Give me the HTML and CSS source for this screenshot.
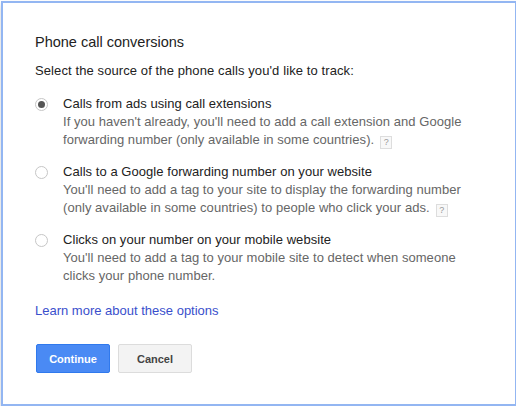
FILE: index.html
```html
<!DOCTYPE html>
<html lang="en">
<head>
  <meta charset="UTF-8">
  <title>Phone call conversions</title>
  <link rel="stylesheet" href="styles.css">
</head>
<body>
  <div class="dialog">
    <h2 class="dialog-title">Phone call conversions</h2>
    <p class="dialog-intro">Select the source of the phone calls you'd like to track:</p>

    <div class="option-list">
      <label class="option">
        <span class="radio radio-checked"></span>
        <span class="option-text">
          <span class="option-label">Calls from ads using call extensions</span>
          <span class="option-desc">If you haven't already, you'll need to add a call extension and Google forwarding number (only available in some countries).<span class="help">?</span></span>
        </span>
      </label>
      <label class="option">
        <span class="radio"></span>
        <span class="option-text">
          <span class="option-label">Calls to a Google forwarding number on your website</span>
          <span class="option-desc">You'll need to add a tag to your site to display the forwarding number (only available in some countries) to people who click your ads.<span class="help">?</span></span>
        </span>
      </label>
      <label class="option">
        <span class="radio"></span>
        <span class="option-text">
          <span class="option-label">Clicks on your number on your mobile website</span>
          <span class="option-desc">You'll need to add a tag to your mobile site to detect when someone clicks your phone number.</span>
        </span>
      </label>
    </div>

    <a href="#" class="learn-more">Learn more about these options</a>

    <div class="dialog-buttons">
      <button type="button" class="btn btn-primary">Continue</button>
      <button type="button" class="btn">Cancel</button>
    </div>
  </div>
</body>
</html>
```

FILE: styles.css
```css
body {
  margin: 0;
  background-color: #fff;
  font-family: Arial, "Liberation Sans", sans-serif;
  font-size: 13px;
  color: #222;
}

.dialog {
  width: 450px;
  margin: 1px 0 0 1px;
  padding: 29px 30px 31px 32px;
  background-color: #fff;
  border: 2px solid #93b6f2;
  box-shadow: 0 4px 6px rgba(0, 0, 0, 0.2);
}

.dialog-title {
  margin: 0 0 10px;
  font-size: 14.5px;
  font-weight: normal;
  line-height: 20px;
  color: #222;
}

.dialog-intro {
  margin: 0 0 15px;
  line-height: 18px;
  letter-spacing: 0.1px;
}

.option-list {
  display: flex;
  flex-direction: column;
  gap: 14px;
}

.option {
  display: flex;
  align-items: flex-start;
  gap: 15px;
  cursor: pointer;
}

.radio {
  flex: none;
  width: 11px;
  height: 11px;
  margin-top: 3px;
  border: 1px solid #c6c6c6;
  border-radius: 50%;
  background-color: #fff;
  display: flex;
  align-items: center;
  justify-content: center;
}

.radio-checked::after {
  content: "";
  width: 7px;
  height: 7px;
  border-radius: 50%;
  background-color: #555;
}

.option-text {
  display: flex;
  flex-direction: column;
  line-height: 18px;
  letter-spacing: 0.05px;
}

.option-desc {
  color: #666;
}

.help {
  display: inline-block;
  width: 10px;
  height: 11px;
  margin-left: 6px;
  border: 1px solid #ddd;
  background-color: #f8f8f8;
  color: #999;
  font-size: 9px;
  line-height: 11px;
  text-align: center;
  vertical-align: -1px;
}

.learn-more {
  display: block;
  margin-top: 17px;
  line-height: 18px;
  color: #3a4fcc;
  text-decoration: none;
}

.dialog-buttons {
  display: flex;
  gap: 8px;
  margin-top: 24px;
  padding-left: 1px;
}

.btn {
  width: 74px;
  height: 29px;
  padding: 0;
  border: 1px solid #dcdcdc;
  border-radius: 2px;
  background-color: #f3f3f3;
  color: #444;
  font-family: Arial, "Liberation Sans", sans-serif;
  font-size: 11px;
  font-weight: bold;
}

.btn-primary {
  border-color: #3079ed;
  background-color: #4a8af4;
  color: #fff;
}
```
